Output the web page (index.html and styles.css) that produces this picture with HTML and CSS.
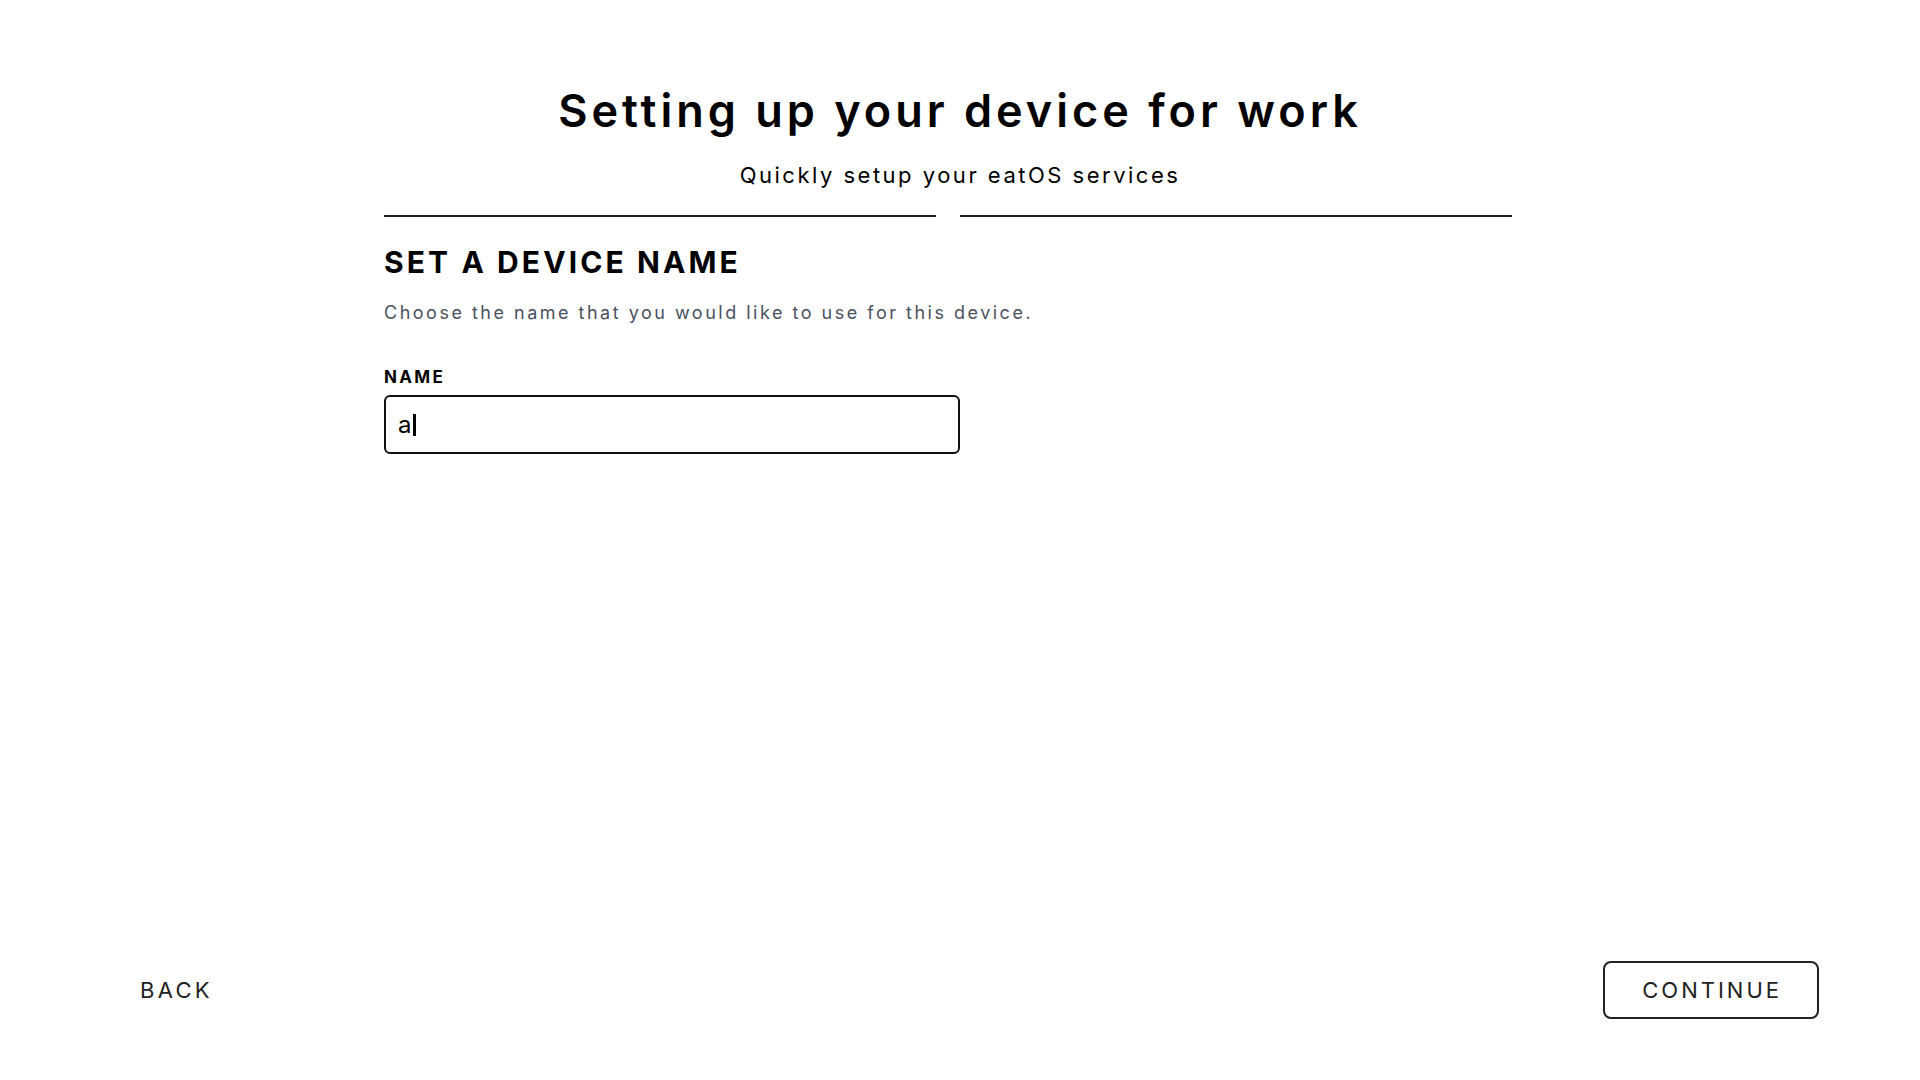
FILE: index.html
```html
<!DOCTYPE html>
<html lang="en">
<head>
<meta charset="utf-8">
<title>Setting up your device for work</title>
<link rel="stylesheet" href="styles.css">
</head>
<body>
<div class="page">
  <main class="main">
    <header class="header">
      <h1 class="title">Setting up your device for work</h1>
      <p class="subtitle">Quickly setup your eatOS services</p>
    </header>
    <div class="stepper">
      <div class="step"><span class="step-line"></span></div>
      <div class="step"><span class="step-line"></span></div>
    </div>
    <section class="section">
      <h2 class="section-title">SET A DEVICE NAME</h2>
      <p class="section-desc">Choose the name that you would like to use for this device.</p>
      <label class="field-label">NAME</label>
      <div class="field"><span class="field-value">a</span><span class="caret"></span></div>
    </section>
  </main>
  <footer class="footer">
    <button class="btn btn-back" type="button">BACK</button>
    <button class="btn btn-continue" type="button">CONTINUE</button>
  </footer>
</div>
</body>
</html>
```
FILE: styles.css
```css
* { box-sizing: border-box; }
html, body { margin: 0; padding: 0; background: #fff; }
body { font-family: "Inter", "DejaVu Sans", sans-serif; color: #000; }

.page {
  min-height: 100vh;
  display: flex;
  flex-direction: column;
}

.main {
  width: 1152px;
  margin: 0 auto;
  padding-top: 84px;
}

.header { text-align: center; }

.title {
  margin: 0;
  font-size: 45px;
  line-height: 54px;
  font-weight: 600;
  letter-spacing: 4px;
}

.subtitle {
  margin: 22px 0 0;
  font-size: 22px;
  line-height: 30px;
  font-weight: 400;
  letter-spacing: 2.5px;
}

.stepper {
  display: grid;
  grid-template-columns: 1fr 1fr;
  margin-top: 25px;
}

.step { padding-right: 24px; }

.step-line {
  display: block;
  height: 2px;
  background: #1c1c1c;
}

.section { display: flex; flex-direction: column; align-items: flex-start; }

.section-title {
  margin: 27px 0 0;
  font-size: 30px;
  line-height: 36px;
  font-weight: 700;
  letter-spacing: 3.1px;
}

.section-desc {
  margin: 21px 0 0;
  font-size: 18px;
  line-height: 24px;
  color: #4a5160;
  letter-spacing: 2.5px;
}

.field-label {
  margin-top: 41px;
  font-size: 17px;
  line-height: 22px;
  font-weight: 700;
  letter-spacing: 2.3px;
}

.field {
  margin-top: 7px;
  width: 576px;
  height: 59px;
  border: 2px solid #111;
  border-radius: 6px;
  padding: 0 12px;
  display: flex;
  align-items: center;
  font-size: 24px;
}

.field-value { line-height: 1; }

.caret {
  display: inline-block;
  width: 3px;
  height: 22px;
  background: #000;
  margin-left: 2px;
}

.footer {
  margin-top: auto;
  display: flex;
  justify-content: space-between;
  padding: 0 101px 61px;
}

.btn {
  font-family: inherit;
  height: 58px;
  padding: 0 35px 0 37px;
  font-size: 22px;
  font-weight: 400;
  color: #222;
  background: #fff;
  border: 2px solid transparent;
  border-radius: 8px;
  cursor: pointer;
}

.btn-back { letter-spacing: 3.3px; }
.btn-continue { border-color: #222; letter-spacing: 3px; }
```
